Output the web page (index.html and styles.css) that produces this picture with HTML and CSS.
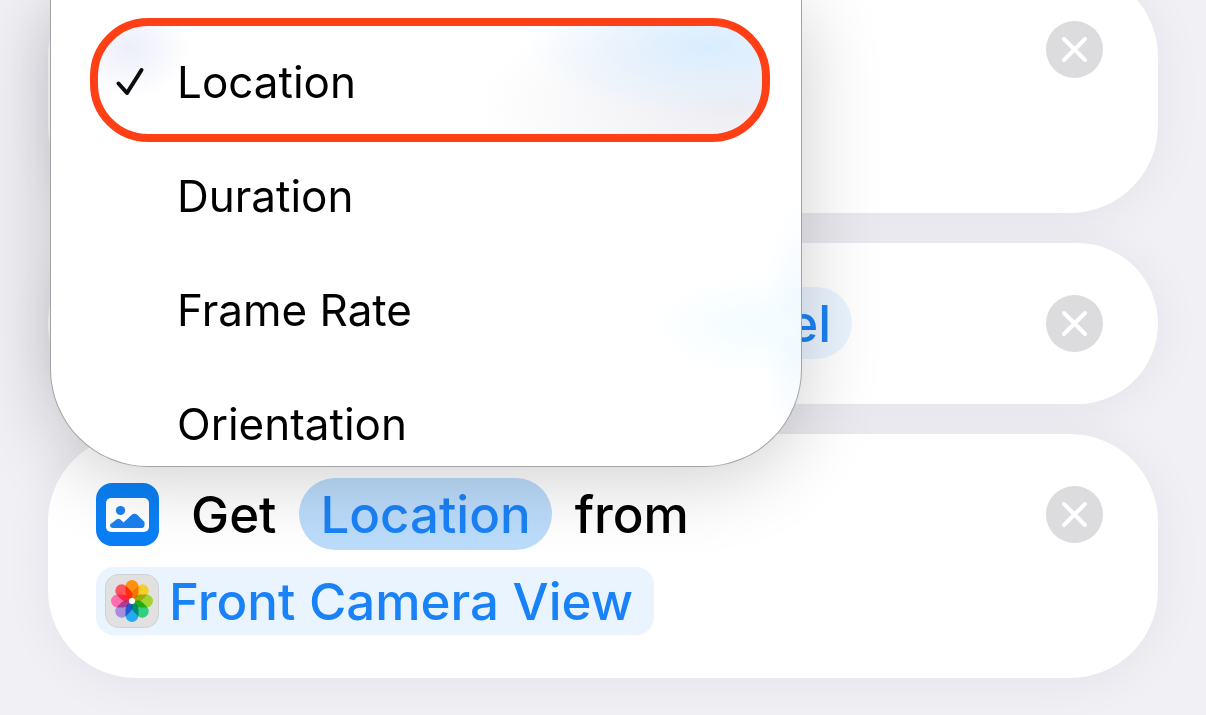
FILE: index.html
```html
<!DOCTYPE html>
<html lang="en">
<head>
    <meta charset="UTF-8">
    <meta name="viewport" content="width=device-width, initial-scale=1.0">
    <title>Shortcuts</title>
    <link rel="stylesheet" href="styles.css">
</head>
<body>

<main class="actions">
    <section class="card">
        <div class="card-content"></div>
        <button class="close" type="button" aria-label="Remove action">
            <svg viewBox="0 0 57 57"><path d="M18 18 39 39M39 18 18 39"/></svg>
        </button>
    </section>

    <section class="card card-short">
        <div class="card-content">
            <div class="line">
                <button class="pill pill-light" type="button">el</button>
            </div>
        </div>
        <button class="close" type="button" aria-label="Remove action">
            <svg viewBox="0 0 57 57"><path d="M18 18 39 39M39 18 18 39"/></svg>
        </button>
    </section>

    <section class="card">
        <div class="card-content">
            <div class="line">
                <svg class="action-icon" viewBox="0 0 63 63">
                    <rect width="63" height="63" rx="16" fill="#0a7ff5"/>
                    <rect x="10" y="15" width="43" height="34" rx="5" fill="#fff"/>
                    <circle cx="24.500" cy="27.500" r="4.600" fill="#1a80ee"/>
                    <path d="M14 41.500 20.500 36.500Q22.500 35 24.500 36.500L27.500 39.500 35.500 32Q38.500 29.600 41.500 32L48.500 39V42Q48.500 45 45.500 45H17Q14 45 14 42Z" fill="#1a80ee"/>
                </svg>
                <span class="word">Get</span>
                <button class="pill" type="button">Location</button>
                <span class="word">from</span>
            </div>
            <button class="tag" type="button">
                <svg class="photos-icon" viewBox="0 0 54 54">
                    <rect x=".5" y=".5" width="53" height="53" rx="13" fill="#e2e1e1" stroke="#cfd0d2"/>
                    <g class="petals">
                        <rect x="20.500" y="6" width="13" height="19" rx="6.500" fill="#ff9010"/>
                        <rect x="20.500" y="6" width="13" height="19" rx="6.500" fill="#f7cd2c" transform="rotate(45 27 27)"/>
                        <rect x="20.500" y="6" width="13" height="19" rx="6.500" fill="#a2d42f" transform="rotate(90 27 27)"/>
                        <rect x="20.500" y="6" width="13" height="19" rx="6.500" fill="#2fd07c" transform="rotate(135 27 27)"/>
                        <rect x="20.500" y="6" width="13" height="19" rx="6.500" fill="#25a9f0" transform="rotate(180 27 27)"/>
                        <rect x="20.500" y="6" width="13" height="19" rx="6.500" fill="#a98cdb" transform="rotate(225 27 27)"/>
                        <rect x="20.500" y="6" width="13" height="19" rx="6.500" fill="#ff6fb0" transform="rotate(270 27 27)"/>
                        <rect x="20.500" y="6" width="13" height="19" rx="6.500" fill="#ff5560" transform="rotate(315 27 27)"/>
                    </g>
                    <circle cx="27" cy="27" r="3" fill="#fff"/>
                </svg>
                Front Camera View
            </button>
        </div>
        <button class="close" type="button" aria-label="Remove action">
            <svg viewBox="0 0 57 57"><path d="M18 18 39 39M39 18 18 39"/></svg>
        </button>
    </section>
</main>

<div class="menu" role="menu">
    <button class="menu-item selected" type="button" role="menuitemradio" aria-checked="true">
        <svg class="check" viewBox="0 0 30 30"><path d="M3.500 16.500 12 26 26.500 3"/></svg>
        Location
    </button>
    <button class="menu-item" type="button" role="menuitemradio" aria-checked="false">Duration</button>
    <button class="menu-item" type="button" role="menuitemradio" aria-checked="false">Frame Rate</button>
    <button class="menu-item" type="button" role="menuitemradio" aria-checked="false">Orientation</button>
</div>

</body>
</html>
```
FILE: styles.css
```css
* {
    box-sizing: border-box;
}

body {
    margin: 0;
    min-height: 100vh;
    overflow: hidden;
    background-color: #f1f0f5;
    color: #000;
    font-family: Inter, "Liberation Sans", sans-serif;
}

button {
    margin: 0;
    padding: 0;
    border: none;
    background: none;
    color: inherit;
    font: inherit;
    cursor: pointer;
}

.actions {
    display: flex;
    flex-direction: column;
    gap: 30px;
    padding: 0 48px 37px;
    margin-top: -31px; /* first card is scrolled partly out of view */
}

.card {
    display: flex;
    justify-content: space-between;
    align-items: flex-start;
    min-height: 244px;
    padding: 44px 55px 43px 48px;
    border-radius: 88px;
    background-color: #fff;
    box-shadow: 0 4px 50px rgba(20, 10, 50, 0.06);
}

.card-short {
    min-height: 161px;
    border-radius: 81px;
}

.card-content {
    display: flex;
    flex-direction: column;
    align-items: flex-start;
    gap: 17px;
    font-size: 51px;
    font-weight: 500;
}

.line {
    display: flex;
    align-items: center;
    height: 72px;
}

.action-icon {
    width: 63px;
    height: 63px;
    margin-right: 32px;
}

.pill {
    height: 72px;
    margin: 0 23px;
    padding: 0 21px;
    border-radius: 36px;
    background-color: #bcdcfb;
    color: #1a82f7;
}

.pill-light {
    width: 172px;
    margin-left: 584px;
    background-color: #eaf4ff;
    text-align: right;
}

.tag {
    display: flex;
    align-items: center;
    gap: 10px;
    height: 68px;
    padding: 0 21px 0 9px;
    border-radius: 18px;
    background-color: #eaf4ff;
    color: #1a82f7;
}

.photos-icon {
    width: 54px;
    height: 54px;
}

.petals {
    isolation: isolate;
}

.petals rect {
    mix-blend-mode: multiply;
}

.close {
    flex: none;
    width: 57px;
    height: 57px;
    margin-top: 8px;
    border-radius: 50%;
    background-color: #dcdcde;
}

.close svg {
    display: block;
    fill: none;
    stroke: #fff;
    stroke-width: 4;
    stroke-linecap: round;
}

/* Menu */
.menu {
    position: absolute;
    top: 0;
    left: 50px;
    width: 752px;
    height: 467px;
    padding: 25px 42px 0;
    overflow: hidden;
    border: 1px solid #a3a3a6;
    border-top: none;
    border-radius: 0 0 98px 98px;
    background:
        radial-gradient(ellipse 110px 50px at 710px 325px, #f2fcff, transparent),
        radial-gradient(ellipse 40px 130px at 750px 330px, #f0f8ff, transparent),
        #fff;
    box-shadow: 0 10px 80px rgba(0, 0, 0, 0.2);
}

.menu-item {
    display: flex;
    align-items: center;
    position: relative;
    width: 100%;
    height: 114px;
    padding-left: 84px;
    font-size: 44px;
}

.selected {
    z-index: 0;
    gap: 32px;
    padding-left: 22px;
}

.selected::before {
    content: "";
    position: absolute;
    inset: -7px -11px -3px -3px;
    z-index: -1;
    border: 8px solid #ff4017;
    border-radius: 58px;
    background:
        radial-gradient(ellipse 60px 50px at 32px 22px, #eceefa, transparent),
        radial-gradient(ellipse 180px 70px at 610px 20px, #d9edff, transparent),
        radial-gradient(ellipse 260px 110px at 640px 80px, #ededf2, transparent),
        #fff;
}

.check {
    width: 30px;
    height: 30px;
    fill: none;
    stroke: #0c0c0c;
    stroke-width: 4;
    stroke-linecap: round;
    stroke-linejoin: round;
}
```
